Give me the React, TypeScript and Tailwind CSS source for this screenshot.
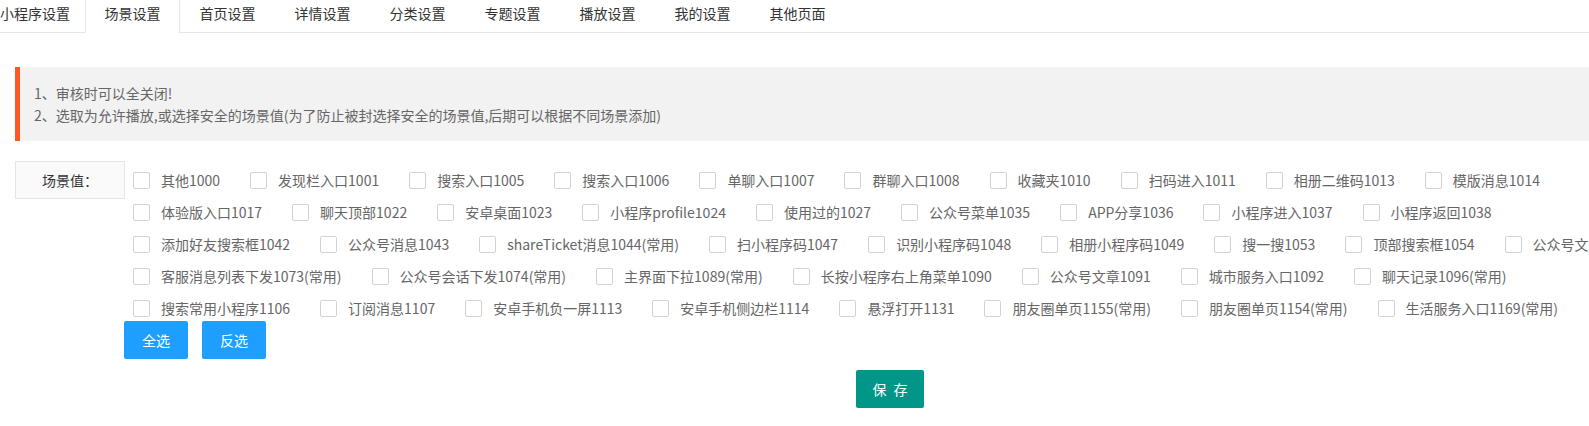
const tabs = ['小程序设置', '场景设置', '首页设置', '详情设置', '分类设置', '专题设置', '播放设置', '我的设置', '其他页面'];

const rows: string[][] = [
  ['其他1000', '发现栏入口1001', '搜索入口1005', '搜索入口1006', '单聊入口1007', '群聊入口1008', '收藏夹1010', '扫码进入1011', '相册二维码1013', '模版消息1014'],
  ['体验版入口1017', '聊天顶部1022', '安卓桌面1023', '小程序profile1024', '使用过的1027', '公众号菜单1035', 'APP分享1036', '小程序进入1037', '小程序返回1038'],
  ['添加好友搜索框1042', '公众号消息1043', 'shareTicket消息1044(常用)', '扫小程序码1047', '识别小程序码1048', '相册小程序码1049', '搜一搜1053', '顶部搜索框1054', '公众号文章1058'],
  ['客服消息列表下发1073(常用)', '公众号会话下发1074(常用)', '主界面下拉1089(常用)', '长按小程序右上角菜单1090', '公众号文章1091', '城市服务入口1092', '聊天记录1096(常用)'],
  ['搜索常用小程序1106', '订阅消息1107', '安卓手机负一屏1113', '安卓手机侧边栏1114', '悬浮打开1131', '朋友圈单页1155(常用)', '朋友圈单页1154(常用)', '生活服务入口1169(常用)'],
];

function Checkbox({ title }: { title: string }) {
  return (
    <label className="flex items-center shrink-0 mr-[30px] cursor-pointer">
      <span className="w-[17px] h-[17px] border border-[#d2d2d2] rounded-[2px] bg-white shrink-0" />
      <span className="ml-[11px] text-[14px] leading-[18px] text-[#666] whitespace-nowrap">{title}</span>
    </label>
  );
}

export default function App() {
  return (
    <div className="w-[1589px] h-[426px] overflow-hidden bg-white font-['Noto_Sans_CJK_SC','Noto_Sans',sans-serif]">
      <ul className="flex h-[33px] border-b border-[#e6e6e6]">
        {tabs.map((t, i) => (
          <li
            key={t}
            className={`h-[33px] leading-[26px] text-[14px] text-[#333] whitespace-nowrap ${
              i === 0 ? 'w-[85px] text-left' : 'w-[95px] text-center'
            } ${i === 1 ? 'bg-white border-x border-[#e6e6e6] -mb-px' : ''}`}
          >
            {t}
          </li>
        ))}
      </ul>

      <div className="mt-[34px] ml-[15px] bg-[#f2f2f2] border-l-[5px] border-[#ff5722] py-[15px] pl-[14px] text-[14px] leading-[22px] text-[#666]">
        <p>1、审核时可以全关闭!</p>
        <p>2、选取为允许播放,或选择安全的场景值(为了防止被封选择安全的场景值,后期可以根据不同场景添加)</p>
      </div>

      <div className="mt-[20px] flex">
        <div className="ml-[15px] w-[110px] h-[38px] shrink-0 flex items-center justify-center bg-[#fafafa] border border-[#e6e6e6] text-[14px] text-[#333]">
          场景值：
        </div>
        <div className="pt-[3px] pl-[8px]">
          {rows.map((row, i) => (
            <div key={i} className="flex items-center h-[32px]">
              {row.map((t) => (
                <Checkbox key={t} title={t} />
              ))}
            </div>
          ))}
        </div>
      </div>

      <div className="ml-[124px] -mt-[3px] flex gap-[14px]">
        <button className="w-[64px] h-[38px] rounded-[2px] bg-[#1e9fff] text-white text-[14px]">全选</button>
        <button className="w-[64px] h-[38px] rounded-[2px] bg-[#1e9fff] text-white text-[14px]">反选</button>
      </div>

      <div className="ml-[124px] w-[1532px] mt-[11px] flex justify-center">
        <button className="w-[68px] h-[38px] rounded-[2px] bg-[#009688] text-white text-[14px] whitespace-pre [word-spacing:4px]">保 存</button>
      </div>
    </div>
  );
}
